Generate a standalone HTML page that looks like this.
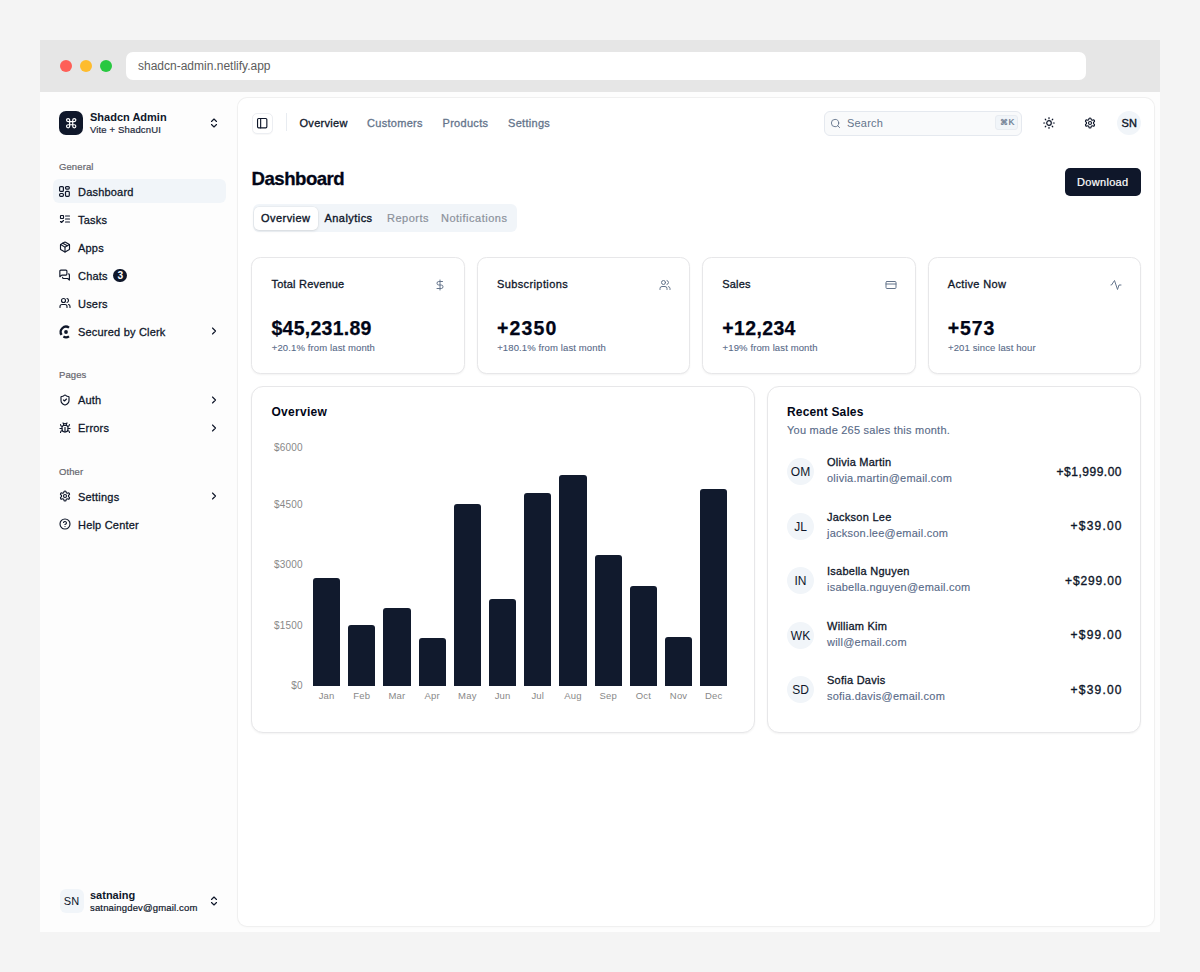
<!DOCTYPE html>
<html><head><meta charset="utf-8">
<style>
*{box-sizing:border-box;margin:0;padding:0}
html,body{width:1200px;height:972px;overflow:hidden;background:#f4f4f4;font-family:"Liberation Sans",sans-serif;color:#0f172a}
.a{position:absolute}
.t{position:absolute;line-height:1;white-space:nowrap}
svg.i{position:absolute;fill:none;stroke:currentColor;stroke-linecap:round;stroke-linejoin:round}
#frame{position:absolute;left:40px;top:40px;width:1120px;height:892px;background:#fdfdfd;overflow:hidden}
#bar{position:absolute;left:0;top:0;width:1120px;height:52px;background:#e6e6e6}
.dot{position:absolute;width:12px;height:12px;border-radius:50%}
#url{position:absolute;left:86px;top:12px;width:960px;height:28px;background:#fff;border-radius:7px}
.card{position:absolute;background:#fff;border:1px solid #e7e7e9;border-radius:11px;box-shadow:0 1px 2px rgba(0,0,0,.05)}
</style></head>
<body>
<div id="frame">
  <div id="bar">
    <div class="dot" style="left:20px;top:20px;background:#fe5f57"></div>
    <div class="dot" style="left:40px;top:20px;background:#febc2e"></div>
    <div class="dot" style="left:60px;top:20px;background:#28c840"></div>
    <div id="url"><span class="t" style="left:12px;top:7.6px;font-size:12px;color:#5c5c5c">shadcn-admin.netlify.app</span></div>
  </div>
</div>
<div class="a" style="left:58.9px;top:110.9px;width:24.3px;height:24.3px;border-radius:7px;background:#0f172a"></div>
<svg class="i" style="left:64.8px;top:117px;color:#fff" width="12.4" height="12.4" viewBox="0 0 24 24" stroke-width="2.3"><path d="M15 6v12a3 3 0 1 0 3-3H6a3 3 0 1 0 3 3V6a3 3 0 1 0-3 3h12a3 3 0 1 0-3-3"/></svg>
<span class="t" style="left:90px;top:111.59px;font-size:11px;font-weight:700;color:#0f172a">Shadcn Admin</span>
<span class="t" style="left:90px;top:124.96px;font-size:9.5px;letter-spacing:.15px;color:#1e293b;-webkit-text-stroke:.2px currentColor;">Vite + ShadcnUI</span>
<svg class="i" style="left:208px;top:117.4px;color:#0f172a" width="12" height="12" viewBox="0 0 24 24" stroke-width="2.3"><path d="m7 15 5 5 5-5"/><path d="m7 9 5-5 5 5"/></svg>
<span class="t" style="left:59px;top:161.86px;font-size:9.5px;color:#66666e;letter-spacing:.1px;-webkit-text-stroke:.2px currentColor;">General</span>
<span class="t" style="left:59px;top:370.16px;font-size:9.5px;color:#66666e;letter-spacing:.1px;-webkit-text-stroke:.2px currentColor;">Pages</span>
<span class="t" style="left:59px;top:466.66px;font-size:9.5px;color:#66666e;letter-spacing:.1px;-webkit-text-stroke:.2px currentColor;">Other</span>
<div class="a" style="left:53px;top:179.2px;width:173px;height:24px;border-radius:6px;background:#f1f5f9"></div>
<svg class="a" style="left:59.3px;top:186.00px;overflow:visible" width="11" height="11" viewBox="0 0 11 11" fill="none" stroke="#0f172a" stroke-width="1.2"><rect x=".6" y=".6" width="3.8" height="4.8" rx="1"/><rect x="6.5" y=".6" width="3.8" height="2.5" rx="1"/><rect x=".6" y="7.5" width="3.8" height="2.8" rx="1"/><rect x="6.5" y="5.3" width="3.8" height="5" rx="1"/></svg>
<span class="t" style="left:78px;top:186.89px;font-size:11px;color:#0f172a;letter-spacing:.2px;-webkit-text-stroke:.28px currentColor">Dashboard</span>
<svg class="i" style="left:59px;top:213.2px;color:#0f172a" width="12" height="12" viewBox="0 0 24 24" stroke-width="2.3"><rect x="3" y="5" width="6" height="6" rx="1"/><path d="m3 17 2 2 4-4"/><path d="M13 6h8"/><path d="M13 12h8"/><path d="M13 18h8"/></svg>
<span class="t" style="left:78px;top:214.89px;font-size:11px;color:#0f172a;letter-spacing:.2px;-webkit-text-stroke:.28px currentColor">Tasks</span>
<svg class="i" style="left:59px;top:241.2px;color:#0f172a" width="12" height="12" viewBox="0 0 24 24" stroke-width="2.3"><path d="M11 21.73a2 2 0 0 0 2 0l7-4A2 2 0 0 0 21 16V8a2 2 0 0 0-1-1.73l-7-4a2 2 0 0 0-2 0l-7 4A2 2 0 0 0 3 8v8a2 2 0 0 0 1 1.73z"/><path d="M12 22V12"/><path d="m3.3 7 7.703 4.734a2 2 0 0 0 1.994 0L20.7 7"/><path d="m7.5 4.27 9 5.15"/></svg>
<span class="t" style="left:78px;top:242.89px;font-size:11px;color:#0f172a;letter-spacing:.2px;-webkit-text-stroke:.28px currentColor">Apps</span>
<svg class="i" style="left:59px;top:269.2px;color:#0f172a" width="12" height="12" viewBox="0 0 24 24" stroke-width="2.3"><path d="M15.8 10.2a2 2 0 0 1-2 2H5.5L1.7 15.4V4.2a2 2 0 0 1 2-2h10.1a2 2 0 0 1 2 2z"/><path d="M19.2 9.8a2 2 0 0 1 1.6 2v10.4l-3.4-3.2H9.2a2 2 0 0 1-2-2v-.6"/></svg>
<span class="t" style="left:78px;top:270.89px;font-size:11px;color:#0f172a;letter-spacing:.2px;-webkit-text-stroke:.28px currentColor">Chats</span>
<svg class="i" style="left:59px;top:297.2px;color:#0f172a" width="12" height="12" viewBox="0 0 24 24" stroke-width="2.3"><path d="M16 21v-2a4 4 0 0 0-4-4H6a4 4 0 0 0-4 4v2"/><circle cx="9" cy="7" r="4"/><path d="M22 21v-2a4 4 0 0 0-3-3.87"/><path d="M16 3.13a4 4 0 0 1 0 7.75"/></svg>
<span class="t" style="left:78px;top:298.89px;font-size:11px;color:#0f172a;letter-spacing:.2px;-webkit-text-stroke:.28px currentColor">Users</span>
<svg class="a" style="left:58px;top:323.60px;overflow:visible" width="16" height="16" viewBox="-8 -8 16 16"><path d="M3.04 -4.34A5.3 5.3 0 0 0 -4.39 2.96" fill="none" stroke="#0f172a" stroke-width="2.3"/><circle cx="0" cy="0" r="1.9" fill="#0f172a"/><path d="M-2.6 4.62A5.3 5.3 0 0 0 3.0 4.37" fill="none" stroke="#0f172a" stroke-width="2.3"/></svg>
<span class="t" style="left:78px;top:326.89px;font-size:11px;color:#0f172a;letter-spacing:.2px;-webkit-text-stroke:.28px currentColor">Secured by Clerk</span>
<svg class="i" style="left:208px;top:325.2px;color:#0f172a" width="12" height="12" viewBox="0 0 24 24" stroke-width="2.3"><path d="m9 18 6-6-6-6"/></svg>
<svg class="i" style="left:59px;top:393.6px;color:#0f172a" width="12" height="12" viewBox="0 0 24 24" stroke-width="2.3"><path d="M20 13c0 5-3.5 7.5-7.66 8.95a1 1 0 0 1-.67-.01C7.5 20.5 4 18 4 13V6a1 1 0 0 1 1-1c2 0 4.5-1.2 6.24-2.72a1.17 1.17 0 0 1 1.52 0C14.51 3.81 17 5 19 5a1 1 0 0 1 1 1z"/><path d="m9 12 2 2 4-4"/></svg>
<span class="t" style="left:78px;top:395.29px;font-size:11px;color:#0f172a;letter-spacing:.2px;-webkit-text-stroke:.28px currentColor">Auth</span>
<svg class="i" style="left:208px;top:393.6px;color:#0f172a" width="12" height="12" viewBox="0 0 24 24" stroke-width="2.3"><path d="m9 18 6-6-6-6"/></svg>
<svg class="i" style="left:59px;top:421.6px;color:#0f172a" width="12" height="12" viewBox="0 0 24 24" stroke-width="2.3"><path d="m8 2 1.88 1.88"/><path d="M14.12 3.88 16 2"/><path d="M9 7.13v-1a3.003 3.003 0 1 1 6 0v1"/><path d="M12 20c-3.3 0-6-2.7-6-6v-3a4 4 0 0 1 4-4h4a4 4 0 0 1 4 4v3c0 3.3-2.7 6-6 6"/><path d="M12 20v-9"/><path d="M6.53 9C4.6 8.8 3 7.1 3 5"/><path d="M6 13H2"/><path d="M3 21c0-2.1 1.7-3.9 3.8-4"/><path d="M20.97 5c0 2.1-1.6 3.8-3.5 4"/><path d="M22 13h-4"/><path d="M17.2 17c2.1.1 3.8 1.9 3.8 4"/></svg>
<span class="t" style="left:78px;top:423.29px;font-size:11px;color:#0f172a;letter-spacing:.2px;-webkit-text-stroke:.28px currentColor">Errors</span>
<svg class="i" style="left:208px;top:421.6px;color:#0f172a" width="12" height="12" viewBox="0 0 24 24" stroke-width="2.3"><path d="m9 18 6-6-6-6"/></svg>
<svg class="i" style="left:59px;top:490.1px;color:#0f172a" width="12" height="12" viewBox="0 0 24 24" stroke-width="2.3"><path d="M12.22 2h-.44a2 2 0 0 0-2 2v.18a2 2 0 0 1-1 1.73l-.43.25a2 2 0 0 1-2 0l-.15-.08a2 2 0 0 0-2.73.73l-.22.38a2 2 0 0 0 .73 2.73l.15.1a2 2 0 0 1 1 1.72v.51a2 2 0 0 1-1 1.74l-.15.09a2 2 0 0 0-.73 2.73l.22.38a2 2 0 0 0 2.73.73l.15-.08a2 2 0 0 1 2 0l.43.25a2 2 0 0 1 1 1.73V20a2 2 0 0 0 2 2h.44a2 2 0 0 0 2-2v-.18a2 2 0 0 1 1-1.73l.43-.25a2 2 0 0 1 2 0l.15.08a2 2 0 0 0 2.73-.73l.22-.39a2 2 0 0 0-.73-2.73l-.15-.08a2 2 0 0 1-1-1.74v-.5a2 2 0 0 1 1-1.74l.15-.09a2 2 0 0 0 .73-2.73l-.22-.38a2 2 0 0 0-2.73-.73l-.15.08a2 2 0 0 1-2 0l-.43-.25a2 2 0 0 1-1-1.73V4a2 2 0 0 0-2-2z"/><circle cx="12" cy="12" r="3"/></svg>
<span class="t" style="left:78px;top:491.79px;font-size:11px;color:#0f172a;letter-spacing:.2px;-webkit-text-stroke:.28px currentColor">Settings</span>
<svg class="i" style="left:208px;top:490.1px;color:#0f172a" width="12" height="12" viewBox="0 0 24 24" stroke-width="2.3"><path d="m9 18 6-6-6-6"/></svg>
<svg class="i" style="left:59px;top:518.1px;color:#0f172a" width="12" height="12" viewBox="0 0 24 24" stroke-width="2.3"><circle cx="12" cy="12" r="10"/><path d="M9.09 9a3 3 0 0 1 5.83 1c0 2-3 3-3 3"/><path d="M12 17h.01"/></svg>
<span class="t" style="left:78px;top:519.79px;font-size:11px;color:#0f172a;letter-spacing:.2px;-webkit-text-stroke:.28px currentColor">Help Center</span>
<div class="a" style="left:113.2px;top:268.6px;width:13.8px;height:13.8px;border-radius:50%;background:#0f172a"></div>
<span class="t" style="left:113.60px;width:13.6px;text-align:center;top:270.57px;font-size:10.2px;font-weight:700;color:#fff">3</span>
<div class="a" style="left:59.5px;top:888.7px;width:24px;height:24px;border-radius:6px;background:#f1f5f9"></div>
<span class="t" style="left:59.50px;width:24px;text-align:center;top:896.19px;font-size:11px;color:#0f172a">SN</span>
<span class="t" style="left:90px;top:889.59px;font-size:11px;font-weight:700;color:#0f172a">satnaing</span>
<span class="t" style="left:90px;top:902.86px;font-size:9.5px;letter-spacing:.16px;color:#0f172a;-webkit-text-stroke:.2px currentColor;">satnaingdev@gmail.com</span>
<svg class="i" style="left:208px;top:895px;color:#0f172a" width="12" height="12" viewBox="0 0 24 24" stroke-width="2.3"><path d="m7 15 5 5 5-5"/><path d="m7 9 5-5 5 5"/></svg>
<div class="a" style="left:238px;top:98px;width:916px;height:828px;background:#fff;border-radius:9px;box-shadow:0 0 0 1px #f0f0f0,0 1px 3px rgba(0,0,0,.04)"></div>
<div class="a" style="left:252px;top:112.5px;width:21px;height:21px;border-radius:5px;border:1px solid #eceef2;background:#fff;box-shadow:0 1px 1px rgba(0,0,0,.03)"></div>
<svg class="i" style="left:256.3px;top:117px;color:#0f172a" width="12.4" height="12.4" viewBox="0 0 24 24" stroke-width="2.2"><rect width="18" height="18" x="3" y="3" rx="2"/><path d="M9 3v18"/></svg>
<div class="a" style="left:285.5px;top:113px;width:1px;height:18px;background:#e8ecf1"></div>
<span class="t" style="left:299.5px;top:118.09px;font-size:11px;color:#0f172a;letter-spacing:.3px;-webkit-text-stroke:.3px currentColor">Overview</span>
<span class="t" style="left:367px;top:118.09px;font-size:11px;color:#64748b;letter-spacing:.3px;-webkit-text-stroke:.3px currentColor">Customers</span>
<span class="t" style="left:442.5px;top:118.09px;font-size:11px;color:#64748b;letter-spacing:.3px;-webkit-text-stroke:.3px currentColor">Products</span>
<span class="t" style="left:508px;top:118.09px;font-size:11px;color:#64748b;letter-spacing:.3px;-webkit-text-stroke:.3px currentColor">Settings</span>
<div class="a" style="left:824px;top:111px;width:198px;height:24.5px;border-radius:6px;border:1px solid #e5e9ef;background:#f9fafb"></div>
<svg class="i" style="left:830px;top:117.5px;color:#64748b" width="11" height="11" viewBox="0 0 24 24" stroke-width="2"><circle cx="11" cy="11" r="8"/><path d="m21 21-4.3-4.3"/></svg>
<span class="t" style="left:847px;top:118.49px;font-size:11px;color:#64748b;letter-spacing:.2px">Search</span>
<div class="a" style="left:995px;top:115px;width:22.5px;height:15px;border-radius:3px;border:1px solid #e8ecf1;background:#f1f5f9"></div>
<span class="t" style="left:999.6px;top:118.85px;font-size:7.5px;color:#64748b;-webkit-text-stroke:.2px currentColor;">&#8984;</span>
<span class="t" style="left:1008.6px;top:117.95px;font-size:8.8px;color:#64748b;-webkit-text-stroke:.2px currentColor;">K</span>
<svg class="i" style="left:1043.25px;top:116.75px;color:#0f172a;overflow:visible" width="12" height="12" viewBox="0 0 24 24" stroke-width="2.4"><circle cx="12" cy="12" r="4.6"/><path d="M12 1.4v2M12 20.6v2M1.4 12h2M20.6 12h2M4.5 4.5l1.2 1.2M18.3 18.3l1.2 1.2M4.5 19.5l1.2-1.2M19.5 4.5l-1.2 1.2"/></svg>
<svg class="i" style="left:1084px;top:117px;color:#0f172a" width="12" height="12" viewBox="0 0 24 24" stroke-width="2.3"><path d="M12.22 2h-.44a2 2 0 0 0-2 2v.18a2 2 0 0 1-1 1.73l-.43.25a2 2 0 0 1-2 0l-.15-.08a2 2 0 0 0-2.73.73l-.22.38a2 2 0 0 0 .73 2.73l.15.1a2 2 0 0 1 1 1.72v.51a2 2 0 0 1-1 1.74l-.15.09a2 2 0 0 0-.73 2.73l.22.38a2 2 0 0 0 2.73.73l.15-.08a2 2 0 0 1 2 0l.43.25a2 2 0 0 1 1 1.73V20a2 2 0 0 0 2 2h.44a2 2 0 0 0 2-2v-.18a2 2 0 0 1 1-1.73l.43-.25a2 2 0 0 1 2 0l.15.08a2 2 0 0 0 2.73-.73l.22-.39a2 2 0 0 0-.73-2.73l-.15-.08a2 2 0 0 1-1-1.74v-.5a2 2 0 0 1 1-1.74l.15-.09a2 2 0 0 0 .73-2.73l-.22-.38a2 2 0 0 0-2.73-.73l-.15.08a2 2 0 0 1-2 0l-.43-.25a2 2 0 0 1-1-1.73V4a2 2 0 0 0-2-2z"/><circle cx="12" cy="12" r="3"/></svg>
<div class="a" style="left:1116.7px;top:111px;width:24px;height:24px;border-radius:50%;background:#f1f5f9"></div>
<span class="t" style="left:1117.20px;width:24px;text-align:center;top:117.89px;font-size:11px;color:#0f172a;-webkit-text-stroke:.4px currentColor">SN</span>
<span class="t" style="left:251.6px;top:170.06px;font-size:18.6px;font-weight:700;color:#020617;letter-spacing:-.5px;-webkit-text-stroke:.3px currentColor">Dashboard</span>
<div class="a" style="left:1064.5px;top:168px;width:76.5px;height:27.5px;border-radius:5px;background:#0f172a"></div>
<span class="t" style="left:1077px;top:177.49px;font-size:11px;color:#fff;letter-spacing:.32px;-webkit-text-stroke:.2px currentColor;">Download</span>
<div class="a" style="left:252.5px;top:204px;width:264px;height:27.5px;border-radius:6px;background:#f1f5f9"></div>
<div class="a" style="left:254px;top:206.8px;width:63.8px;height:22.8px;border-radius:5px;background:#fff;box-shadow:0 0 0 .5px rgba(0,0,0,.04),0 1px 3px rgba(0,0,0,.1)"></div>
<span class="t" style="left:261px;top:212.69px;font-size:11px;color:#0f172a;letter-spacing:0.45px;-webkit-text-stroke:0.35px currentColor">Overview</span>
<span class="t" style="left:324.5px;top:212.69px;font-size:11px;color:#0f172a;letter-spacing:0.45px;-webkit-text-stroke:0.35px currentColor">Analytics</span>
<span class="t" style="left:387px;top:212.69px;font-size:11px;color:#8b919b;letter-spacing:0.5px;-webkit-text-stroke:0.2px currentColor">Reports</span>
<span class="t" style="left:441px;top:212.69px;font-size:11px;color:#8b919b;letter-spacing:0.5px;-webkit-text-stroke:0.2px currentColor">Notifications</span>
<div class="card" style="left:251.30px;top:257.3px;width:213.5px;height:116.3px;border-radius:9.5px"></div>
<span class="t" style="left:271.5px;top:278.69px;font-size:11px;color:#0f172a;letter-spacing:0.2px;-webkit-text-stroke:.3px currentColor">Total Revenue</span>
<svg class="i" style="left:433.7px;top:278.6px;color:#64748b" width="12" height="12" viewBox="0 0 24 24" stroke-width="2"><line x1="12" x2="12" y1="2" y2="22"/><path d="M17 5H9.5a3.5 3.5 0 0 0 0 7h5a3.5 3.5 0 0 1 0 7H6"/></svg>
<span class="t" style="left:271.5px;top:318.69px;font-size:19.5px;font-weight:700;color:#020617;letter-spacing:0.25px;-webkit-text-stroke:.25px currentColor">$45,231.89</span>
<span class="t" style="left:271.8px;top:342.96px;font-size:9.5px;color:#586a88;letter-spacing:.12px;-webkit-text-stroke:.1px currentColor">+20.1% from last month</span>
<div class="card" style="left:476.70px;top:257.3px;width:213.5px;height:116.3px;border-radius:9.5px"></div>
<span class="t" style="left:496.9px;top:278.69px;font-size:11px;color:#0f172a;letter-spacing:0.4px;-webkit-text-stroke:.3px currentColor">Subscriptions</span>
<svg class="i" style="left:659.1px;top:278.6px;color:#64748b" width="12" height="12" viewBox="0 0 24 24" stroke-width="2"><path d="M16 21v-2a4 4 0 0 0-4-4H6a4 4 0 0 0-4 4v2"/><circle cx="9" cy="7" r="4"/><path d="M22 21v-2a4 4 0 0 0-3-3.87"/><path d="M16 3.13a4 4 0 0 1 0 7.75"/></svg>
<span class="t" style="left:496.9px;top:318.69px;font-size:19.5px;font-weight:700;color:#020617;letter-spacing:1.2px;-webkit-text-stroke:.25px currentColor">+2350</span>
<span class="t" style="left:497.2px;top:342.96px;font-size:9.5px;color:#586a88;letter-spacing:.12px;-webkit-text-stroke:.1px currentColor">+180.1% from last month</span>
<div class="card" style="left:702.10px;top:257.3px;width:213.5px;height:116.3px;border-radius:9.5px"></div>
<span class="t" style="left:722.3px;top:278.69px;font-size:11px;color:#0f172a;letter-spacing:0.15px;-webkit-text-stroke:.3px currentColor">Sales</span>
<svg class="i" style="left:884.5px;top:278.6px;color:#64748b" width="12" height="12" viewBox="0 0 24 24" stroke-width="2"><rect width="20" height="14" x="2" y="5" rx="2"/><line x1="2" x2="22" y1="10" y2="10"/></svg>
<span class="t" style="left:722.3px;top:318.69px;font-size:19.5px;font-weight:700;color:#020617;letter-spacing:0.35px;-webkit-text-stroke:.25px currentColor">+12,234</span>
<span class="t" style="left:722.6px;top:342.96px;font-size:9.5px;color:#586a88;letter-spacing:.12px;-webkit-text-stroke:.1px currentColor">+19% from last month</span>
<div class="card" style="left:927.50px;top:257.3px;width:213.5px;height:116.3px;border-radius:9.5px"></div>
<span class="t" style="left:947.7px;top:278.69px;font-size:11px;color:#0f172a;letter-spacing:0.37px;-webkit-text-stroke:.3px currentColor">Active Now</span>
<svg class="i" style="left:1109.9px;top:278.6px;color:#64748b" width="12" height="12" viewBox="0 0 24 24" stroke-width="2"><path d="M22 12h-4l-3 9L9 3l-6 9H2"/></svg>
<span class="t" style="left:947.7px;top:318.69px;font-size:19.5px;font-weight:700;color:#020617;letter-spacing:0.9px;-webkit-text-stroke:.25px currentColor">+573</span>
<span class="t" style="left:948.0px;top:342.96px;font-size:9.5px;color:#586a88;letter-spacing:.12px;-webkit-text-stroke:.1px currentColor">+201 since last hour</span>
<div class="card" style="left:251.4px;top:386.1px;width:503.5px;height:347px;border-radius:12px"></div>
<span class="t" style="left:271.4px;top:406.24px;font-size:12px;font-weight:700;color:#020617;letter-spacing:.3px">Overview</span>
<span class="t" style="left:232.80px;width:70px;text-align:right;top:442.84px;font-size:10px;color:#888;letter-spacing:.2px">$6000</span>
<span class="t" style="left:232.80px;width:70px;text-align:right;top:500.29px;font-size:10px;color:#888;letter-spacing:.2px">$4500</span>
<span class="t" style="left:232.80px;width:70px;text-align:right;top:560.48px;font-size:10px;color:#888;letter-spacing:.2px">$3000</span>
<span class="t" style="left:232.80px;width:70px;text-align:right;top:620.98px;font-size:10px;color:#888;letter-spacing:.2px">$1500</span>
<span class="t" style="left:232.80px;width:70px;text-align:right;top:681.38px;font-size:10px;color:#888;letter-spacing:.2px">$0</span>
<div class="a" style="left:312.90px;top:577.7px;width:27.4px;height:108.3px;background:#111a2d;border-radius:3px 3px 0 0"></div>
<span class="t" style="left:302.90px;width:47.4px;text-align:center;top:690.96px;font-size:9.5px;color:#888;letter-spacing:.2px">Jan</span>
<div class="a" style="left:348.10px;top:624.8px;width:27.4px;height:61.2px;background:#111a2d;border-radius:3px 3px 0 0"></div>
<span class="t" style="left:338.10px;width:47.4px;text-align:center;top:690.96px;font-size:9.5px;color:#888;letter-spacing:.2px">Feb</span>
<div class="a" style="left:383.30px;top:608.3px;width:27.4px;height:77.7px;background:#111a2d;border-radius:3px 3px 0 0"></div>
<span class="t" style="left:373.30px;width:47.4px;text-align:center;top:690.96px;font-size:9.5px;color:#888;letter-spacing:.2px">Mar</span>
<div class="a" style="left:418.50px;top:638px;width:27.4px;height:48.0px;background:#111a2d;border-radius:3px 3px 0 0"></div>
<span class="t" style="left:408.50px;width:47.4px;text-align:center;top:690.96px;font-size:9.5px;color:#888;letter-spacing:.2px">Apr</span>
<div class="a" style="left:453.70px;top:504.2px;width:27.4px;height:181.8px;background:#111a2d;border-radius:3px 3px 0 0"></div>
<span class="t" style="left:443.70px;width:47.4px;text-align:center;top:690.96px;font-size:9.5px;color:#888;letter-spacing:.2px">May</span>
<div class="a" style="left:488.90px;top:598.6px;width:27.4px;height:87.4px;background:#111a2d;border-radius:3px 3px 0 0"></div>
<span class="t" style="left:478.90px;width:47.4px;text-align:center;top:690.96px;font-size:9.5px;color:#888;letter-spacing:.2px">Jun</span>
<div class="a" style="left:524.10px;top:493.3px;width:27.4px;height:192.7px;background:#111a2d;border-radius:3px 3px 0 0"></div>
<span class="t" style="left:514.10px;width:47.4px;text-align:center;top:690.96px;font-size:9.5px;color:#888;letter-spacing:.2px">Jul</span>
<div class="a" style="left:559.30px;top:474.8px;width:27.4px;height:211.2px;background:#111a2d;border-radius:3px 3px 0 0"></div>
<span class="t" style="left:549.30px;width:47.4px;text-align:center;top:690.96px;font-size:9.5px;color:#888;letter-spacing:.2px">Aug</span>
<div class="a" style="left:594.50px;top:555px;width:27.4px;height:131.0px;background:#111a2d;border-radius:3px 3px 0 0"></div>
<span class="t" style="left:584.50px;width:47.4px;text-align:center;top:690.96px;font-size:9.5px;color:#888;letter-spacing:.2px">Sep</span>
<div class="a" style="left:629.70px;top:586.3px;width:27.4px;height:99.7px;background:#111a2d;border-radius:3px 3px 0 0"></div>
<span class="t" style="left:619.70px;width:47.4px;text-align:center;top:690.96px;font-size:9.5px;color:#888;letter-spacing:.2px">Oct</span>
<div class="a" style="left:664.90px;top:636.5px;width:27.4px;height:49.5px;background:#111a2d;border-radius:3px 3px 0 0"></div>
<span class="t" style="left:654.90px;width:47.4px;text-align:center;top:690.96px;font-size:9.5px;color:#888;letter-spacing:.2px">Nov</span>
<div class="a" style="left:700.10px;top:488.8px;width:27.4px;height:197.2px;background:#111a2d;border-radius:3px 3px 0 0"></div>
<span class="t" style="left:690.10px;width:47.4px;text-align:center;top:690.96px;font-size:9.5px;color:#888;letter-spacing:.2px">Dec</span>
<div class="card" style="left:766.6px;top:386.1px;width:374.4px;height:347px;border-radius:12px"></div>
<span class="t" style="left:787px;top:406.24px;font-size:12px;font-weight:700;color:#020617;letter-spacing:.15px">Recent Sales</span>
<span class="t" style="left:787px;top:425.09px;font-size:11px;color:#586a88;letter-spacing:.23px;-webkit-text-stroke:.12px currentColor">You made 265 sales this month.</span>
<div class="a" style="left:787px;top:458.0px;width:27px;height:27px;border-radius:50%;background:#f1f5f9"></div>
<span class="t" style="left:787.00px;width:27px;text-align:center;top:466.14px;font-size:12px;color:#0f172a">OM</span>
<span class="t" style="left:827px;top:457.09px;font-size:11px;color:#0f172a;letter-spacing:.25px;-webkit-text-stroke:.3px currentColor">Olivia Martin</span>
<span class="t" style="left:827px;top:473.09px;font-size:11px;color:#586a88;letter-spacing:.23px;-webkit-text-stroke:.12px currentColor">olivia.martin@email.com</span>
<span class="t" style="left:922.00px;width:200px;text-align:right;top:465.54px;font-size:12px;color:#0f172a;letter-spacing:0.5px;-webkit-text-stroke:.35px currentColor">+$1,999.00</span>
<div class="a" style="left:787px;top:512.5px;width:27px;height:27px;border-radius:50%;background:#f1f5f9"></div>
<span class="t" style="left:787.00px;width:27px;text-align:center;top:520.64px;font-size:12px;color:#0f172a">JL</span>
<span class="t" style="left:827px;top:511.59px;font-size:11px;color:#0f172a;letter-spacing:.25px;-webkit-text-stroke:.3px currentColor">Jackson Lee</span>
<span class="t" style="left:827px;top:527.59px;font-size:11px;color:#586a88;letter-spacing:.23px;-webkit-text-stroke:.12px currentColor">jackson.lee@email.com</span>
<span class="t" style="left:922.70px;width:200px;text-align:right;top:520.04px;font-size:12px;color:#0f172a;letter-spacing:1.2px;-webkit-text-stroke:.35px currentColor">+$39.00</span>
<div class="a" style="left:787px;top:567.0px;width:27px;height:27px;border-radius:50%;background:#f1f5f9"></div>
<span class="t" style="left:787.00px;width:27px;text-align:center;top:575.14px;font-size:12px;color:#0f172a">IN</span>
<span class="t" style="left:827px;top:566.09px;font-size:11px;color:#0f172a;letter-spacing:.25px;-webkit-text-stroke:.3px currentColor">Isabella Nguyen</span>
<span class="t" style="left:827px;top:582.09px;font-size:11px;color:#586a88;letter-spacing:.23px;-webkit-text-stroke:.12px currentColor">isabella.nguyen@email.com</span>
<span class="t" style="left:922.36px;width:200px;text-align:right;top:574.54px;font-size:12px;color:#0f172a;letter-spacing:0.86px;-webkit-text-stroke:.35px currentColor">+$299.00</span>
<div class="a" style="left:787px;top:621.5px;width:27px;height:27px;border-radius:50%;background:#f1f5f9"></div>
<span class="t" style="left:787.00px;width:27px;text-align:center;top:629.64px;font-size:12px;color:#0f172a">WK</span>
<span class="t" style="left:827px;top:620.59px;font-size:11px;color:#0f172a;letter-spacing:.25px;-webkit-text-stroke:.3px currentColor">William Kim</span>
<span class="t" style="left:827px;top:636.59px;font-size:11px;color:#586a88;letter-spacing:.23px;-webkit-text-stroke:.12px currentColor">will@email.com</span>
<span class="t" style="left:922.70px;width:200px;text-align:right;top:629.04px;font-size:12px;color:#0f172a;letter-spacing:1.2px;-webkit-text-stroke:.35px currentColor">+$99.00</span>
<div class="a" style="left:787px;top:676.0px;width:27px;height:27px;border-radius:50%;background:#f1f5f9"></div>
<span class="t" style="left:787.00px;width:27px;text-align:center;top:684.14px;font-size:12px;color:#0f172a">SD</span>
<span class="t" style="left:827px;top:675.09px;font-size:11px;color:#0f172a;letter-spacing:.25px;-webkit-text-stroke:.3px currentColor">Sofia Davis</span>
<span class="t" style="left:827px;top:691.09px;font-size:11px;color:#586a88;letter-spacing:.23px;-webkit-text-stroke:.12px currentColor">sofia.davis@email.com</span>
<span class="t" style="left:922.70px;width:200px;text-align:right;top:683.54px;font-size:12px;color:#0f172a;letter-spacing:1.2px;-webkit-text-stroke:.35px currentColor">+$39.00</span>
</body></html>
